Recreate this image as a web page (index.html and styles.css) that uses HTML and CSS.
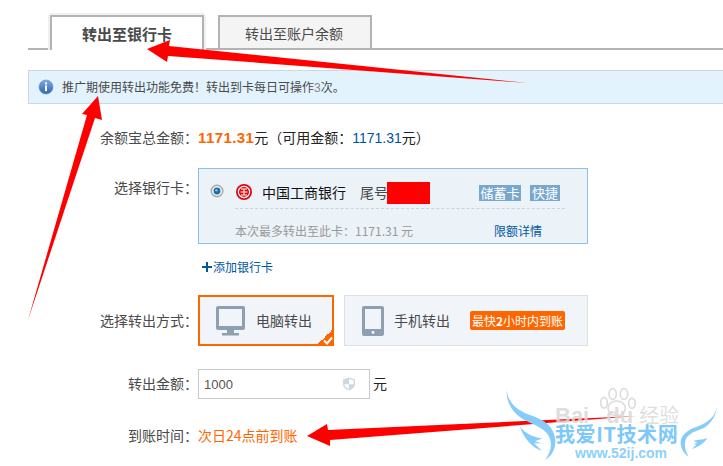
FILE: index.html
```html
<!DOCTYPE html>
<html lang="zh-CN">
<head>
    <meta charset="UTF-8">
    <meta name="viewport" content="width=device-width, initial-scale=1.0">
    <title>转出至银行卡</title>
    <link rel="stylesheet" href="styles.css">
</head>
<body>
    <div class="page">
        <div class="tabs">
            <div class="tab tab-active">转出至银行卡</div>
            <div class="tab">转出至账户余额</div>
        </div>

        <div class="notice">
            <svg class="notice-icon" width="16" height="16" viewBox="0 0 16 16">
                <defs>
                    <linearGradient id="info-fill" x1="0" y1="0" x2="0" y2="1">
                        <stop offset="0" stop-color="#7fa9dc"/>
                        <stop offset="1" stop-color="#2f66ad"/>
                    </linearGradient>
                </defs>
                <circle cx="8" cy="8" r="7" fill="url(#info-fill)" stroke="#5f8cc4" stroke-width="0.6"/>
                <rect x="7" y="3.4" width="2" height="2" fill="#fff"/>
                <rect x="7" y="6.4" width="2" height="5.8" fill="#fff"/>
            </svg>
            <span class="notice-text">推广期使用转出功能免费！转出到卡每日可操作<span class="num-gray">3</span>次。</span>
        </div>

        <div class="row row-total">
            <div class="label">余额宝总金额：</div>
            <div class="total">
                <b class="amount-strong">1171.31</b>元（可用金额：<span class="amount-blue">1171.31</span>元）
            </div>
        </div>

        <div class="row row-card">
            <div class="label label-card">选择银行卡：</div>
            <div class="card">
                <div class="card-top">
                    <svg class="radio" width="14" height="14" viewBox="0 0 14 14">
                        <circle cx="7" cy="7" r="5.8" fill="#eef0f2" stroke="#a8a8a8" stroke-width="1.4"/>
                        <circle cx="7" cy="7" r="3.4" fill="#1c6ea8"/>
                        <circle cx="6.4" cy="6.2" r="1.2" fill="#7cc0e8"/>
                    </svg>
                    <svg class="bank-logo" width="16" height="16" viewBox="0 0 16 16">
                        <circle cx="8" cy="8" r="8" fill="#e0060f"/>
                        <circle cx="8" cy="8" r="5.600" fill="none" stroke="#fff" stroke-width="1.200"/>
                        <path d="M5 5h6M4.500 8h7M5 11h6M8 5v6" stroke="#fff" stroke-width="1" fill="none"/>
                    </svg>
                    <span class="bank-name">中国工商银行</span>
                    <span class="bank-tail">尾号</span>
                    <span class="redact"></span>
                    <span class="tag tag-first">储蓄卡</span>
                    <span class="tag">快捷</span>
                </div>
                <div class="card-bottom">
                    <span class="card-limit">本次最多转出至此卡：1171.31 元</span>
                    <span class="link">限额详情</span>
                </div>
            </div>
        </div>

        <div class="add-card link"><span class="plus"></span><span class="add-text">添加银行卡</span></div>

        <div class="row row-method">
            <div class="label">选择转出方式：</div>
            <div class="method method-on">
                <svg width="30" height="30" viewBox="0 0 30 30">
                    <path fill="#8e9fb2" fill-rule="evenodd" d="M2 0h25a2 2 0 0 1 2 2v20a2 2 0 0 1-2 2H18v3h5v2.500H6V27h5v-3H2a2 2 0 0 1-2-2V2a2 2 0 0 1 2-2zM3 3v17h23V3z"/>
                </svg>
                <span class="method-text">电脑转出</span>
                <span class="corner">
                    <svg width="10" height="9" viewBox="0 0 10 9">
                        <path d="M1 4.500l3 3 5-6" fill="none" stroke="#fff" stroke-width="2"/>
                    </svg>
                </span>
            </div>
            <div class="method method-phone">
                <svg width="22" height="30" viewBox="0 0 22 30">
                    <path fill="#8e9fb2" fill-rule="evenodd" d="M2 0h18a2 2 0 0 1 2 2v26a2 2 0 0 1-2 2H2a2 2 0 0 1-2-2V2a2 2 0 0 1 2-2zM3 3v20h16V3z"/>
                    <circle cx="11" cy="26.400" r="1.400" fill="#fff"/>
                </svg>
                <span class="method-text">手机转出</span>
                <span class="badge">最快<b>2</b>小时内到账</span>
            </div>
        </div>

        <div class="row row-amount">
            <div class="label">转出金额：</div>
            <div class="amount-input">
                <span class="amount-value">1000</span>
                <svg width="14" height="14" viewBox="0 0 14 14">
                    <path d="M7 0.500l6 2v4.500c0 3.300-2.800 5.500-6 6.500-3.200-1-6-3.200-6-6.500V2.500z" fill="#ccd9e4"/>
                    <path d="M7 2l4.600 1.500v3.700H7zM7 7.200v4.700c-2.200-0.900-4.400-2.400-4.600-4.700z" fill="#fff"/>
                </svg>
            </div>
            <span class="unit">元</span>
        </div>

        <div class="row row-time">
            <div class="label">到账时间：</div>
            <div class="arrive">次日24点前到账</div>
        </div>

        <svg class="arrows" width="723" height="466" viewBox="0 0 723 466">
            <polygon fill="#f00" points="147,49 170,40 169,46 528,83 168,56 167,62"/>
            <polygon fill="#f00" points="98,96 102,120 95,118 28,320 87,115 82,114"/>
            <polygon fill="#f00" points="307,436 327,424 328,430 637,416 330,440 330,446"/>
        </svg>

        <div class="watermark">
            <svg class="wings" width="243" height="86" viewBox="0 0 729 258">
                <g fill="none" stroke="#dcdcdc" stroke-width="5">
                    <ellipse cx="410" cy="85" rx="26" ry="22"/>
                    <ellipse cx="372" cy="68" rx="10" ry="16"/>
                    <ellipse cx="398" cy="42" rx="11" ry="16"/>
                    <ellipse cx="432" cy="42" rx="11" ry="16"/>
                    <ellipse cx="456" cy="70" rx="10" ry="15"/>
                </g>
                <g fill="#86ccfb">
                    <path d="M80 30C85 70 110 90 150 105C195 120 222 140 226 180C228 205 215 228 195 240C208 222 215 205 212 185C208 160 190 145 150 128C105 110 78 75 80 30z"/>
                    <path d="M120 140C135 160 160 172 188 175L165 184L185 190L162 190C170 198 178 205 186 212C160 205 130 175 120 140z"/>
                    <path d="M710 80C705 110 685 128 650 140C622 150 604 165 602 185C601 205 612 220 626 230C618 215 612 200 616 182C620 165 640 155 665 147C690 135 708 110 710 80z"/>
                    <path d="M682 174C665 180 650 180 640 182L652 188L640 192L650 194C645 198 640 202 636 208C655 200 672 190 682 174z"/>
                </g>
            </svg>
            <div class="wm-baidu">Bai<span class="wm-paw"></span>du<span class="wm-jy">经验</span></div>
            <div class="wm-title">我爱IT技术网</div>
            <div class="wm-url">www.52ij.com</div>
        </div>
    </div>
</body>
</html>
```

FILE: styles.css
```css
html, body {
    margin: 0;
    padding: 0;
    background-color: #fff;
}
.page {
    position: relative;
    width: 723px;
    height: 466px;
    overflow: hidden;
    font-family: "Noto Sans CJK SC", "Liberation Sans", sans-serif;
    font-size: 14px;
    color: #4a4a4a;
}

/* tabs */
.tabs {
    display: flex;
    gap: 14px;
    box-sizing: border-box;
    height: 50px;
    margin-left: 28px;
    padding: 15px 0 0 22px;
    border-bottom: 2px solid #b3b3b3;
}
.tab {
    box-sizing: border-box;
    width: 154px;
    height: 33px;
    padding-right: 2px;
    border: 2px solid #b3b3b3;
    border-bottom: none;
    background-color: #f4f4f4;
    text-align: center;
    line-height: 33px;
}
.tab-active {
    height: 35px;
    padding-right: 0;
    background-color: #fff;
    font-size: 15px;
    font-weight: bold;
    box-shadow: -2px 0 0 #f0f0f0, 2px 0 0 #f0f0f0, 0 -2px 0 #f0f0f0;
}

/* notice */
.notice {
    display: flex;
    align-items: center;
    box-sizing: border-box;
    height: 34px;
    margin: 20px 0 0 28px;
    padding-left: 9px;
    border: 1px solid #cfd8df;
    border-right: none;
    background-color: #e2f3fe;
    font-size: 12px;
}
.notice-icon {
    margin-right: 8px;
}
.notice-text {
    padding-bottom: 2px;
}
.num-gray {
    color: #888;
    font-family: "Liberation Sans", sans-serif;
}

/* form rows */
.row {
    display: flex;
    align-items: center;
}
.label {
    flex: none;
    box-sizing: border-box;
    width: 198px;
    padding-bottom: 2px;
    text-align: right;
    white-space: nowrap;
}
.row-total {
    height: 20px;
    margin-top: 24px;
}
.total {
    padding-bottom: 2px;
    color: #222;
}
.amount-strong {
    color: #f60;
    font-family: "Liberation Sans", sans-serif;
    font-size: 15px;
    letter-spacing: 0.4px;
}
.amount-blue {
    color: #00509d;
    font-family: "Liberation Sans", sans-serif;
}

/* bank card */
.row-card {
    align-items: flex-start;
    margin-top: 20px;
}
.label-card {
    padding-top: 9px;
}
.card {
    position: relative;
    box-sizing: border-box;
    width: 390px;
    height: 76px;
    padding: 10px 22px 0 36px;
    border: 1px solid #8fc1de;
    background-color: #ebf2f8;
}
.card-top {
    display: flex;
    align-items: center;
    height: 29px;
    border-bottom: 1px dashed #cfd3d6;
    white-space: nowrap;
}
.radio {
    position: absolute;
    left: 11px;
    top: 15px;
}
.bank-logo {
    flex: none;
    margin: 0 10px 3px 1px;
}
.bank-name {
    flex: none;
    margin-right: 14px;
    padding-bottom: 4px;
    color: #111;
}
.bank-tail {
    flex: none;
    padding-bottom: 4px;
}
.redact {
    flex: none;
    width: 43px;
    height: 22px;
    margin: -2px 49px 0 -1px;
    background-color: #f00;
}
.tag {
    flex: none;
    width: 30px;
    margin-bottom: 2px;
    background-color: #78a7cd;
    color: #fff;
    font-size: 13px;
    line-height: 16px;
    text-align: center;
}
.tag-first {
    width: 42px;
    margin-right: 9px;
}
.card-bottom {
    display: flex;
    justify-content: space-between;
    align-items: center;
    box-sizing: border-box;
    height: 34px;
    padding: 8px 23px 0 0;
    font-size: 12px;
}
.card-limit {
    color: #999;
}
.link {
    color: #00589f;
}
.add-card {
    display: flex;
    align-items: center;
    height: 16px;
    margin: 15px 0 0 202px;
    font-size: 12px;
}
.add-text {
    padding-bottom: 2px;
}
.plus {
    width: 10px;
    height: 10px;
    margin-right: 1px;
    background:
        linear-gradient(#00589f, #00589f) center / 10px 2px no-repeat,
        linear-gradient(#00589f, #00589f) center / 2px 10px no-repeat;
}

/* method */
.row-method {
    margin-top: 20px;
}
.method {
    position: relative;
    display: flex;
    align-items: center;
    box-sizing: border-box;
    height: 51px;
    background-color: #f1f5fa;
}
.method-on {
    width: 136px;
    padding-left: 16px;
    border: 2px solid #f60;
}
.method-phone {
    width: 244px;
    margin-left: 10px;
    padding-left: 17px;
    border: 1px solid #dde1e6;
}
.method-text {
    margin-left: 10px;
    padding-bottom: 2px;
    white-space: nowrap;
}
.corner {
    position: absolute;
    right: -2px;
    bottom: -2px;
    width: 18px;
    height: 18px;
    background: linear-gradient(135deg, transparent 50%, #f60 50%);
}
.corner svg {
    position: absolute;
    right: 1px;
    bottom: 1px;
}
.badge {
    margin-left: 20px;
    padding: 0 2px;
    border-radius: 2px;
    background-color: #f60;
    color: #fff;
    font-size: 12px;
    line-height: 19px;
    white-space: nowrap;
}

/* amount */
.row-amount {
    margin-top: 23px;
}
.amount-input {
    display: flex;
    justify-content: space-between;
    align-items: center;
    box-sizing: border-box;
    width: 172px;
    height: 30px;
    padding: 0 13px 0 5px;
    border: 1px solid #c8c8c8;
}
.amount-value {
    color: #555;
    font-family: "Liberation Sans", sans-serif;
    font-size: 13px;
}
.unit {
    margin-left: 3px;
    padding-bottom: 2px;
    color: #222;
}
.row-time {
    height: 20px;
    margin-top: 27px;
}
.arrive {
    padding-bottom: 2px;
    color: #f60;
}

/* overlays */
.arrows {
    position: absolute;
    left: 0;
    top: 0;
}
.watermark {
    position: absolute;
    left: 480px;
    top: 380px;
    width: 243px;
    height: 86px;
}
.wings {
    position: absolute;
    left: 0;
    top: 0;
}
.wm-baidu {
    position: absolute;
    left: 75px;
    top: 27px;
    height: 16px;
    color: rgba(216, 216, 216, 0.85);
    font-family: "Liberation Sans", sans-serif;
    font-size: 22px;
    font-weight: bold;
    line-height: 16px;
    white-space: nowrap;
}
.wm-paw {
    display: inline-block;
    width: 17px;
}
.wm-jy {
    margin-left: 6px;
    font-family: "Noto Sans CJK SC", sans-serif;
    font-size: 20px;
    font-weight: normal;
}
.wm-title {
    position: absolute;
    left: 75px;
    top: 44px;
    color: #7cc8fa;
    font-size: 20px;
    font-weight: bold;
    line-height: 20px;
    letter-spacing: 0.6px;
    white-space: nowrap;
}
.wm-url {
    position: absolute;
    left: 95px;
    top: 66px;
    color: #8dd0fb;
    font-family: "Liberation Sans", sans-serif;
    font-size: 14px;
    font-weight: bold;
    line-height: 14px;
    white-space: nowrap;
}
```
